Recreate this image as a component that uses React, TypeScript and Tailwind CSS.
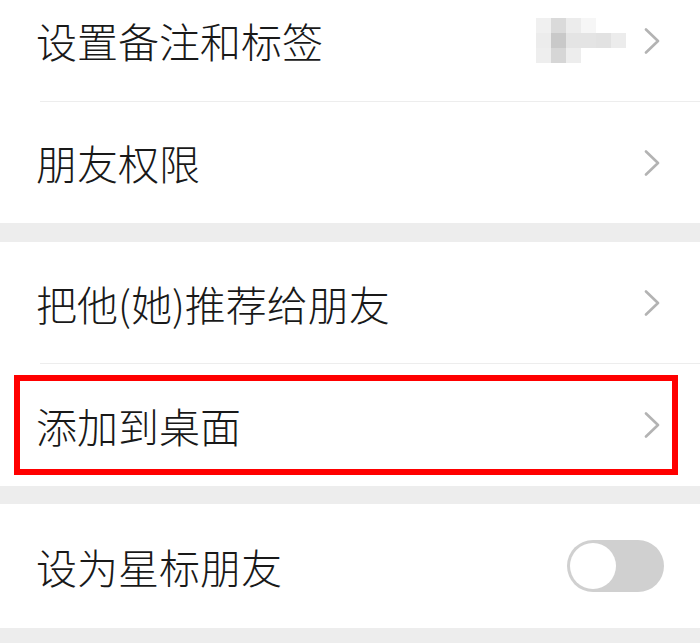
import React from 'react';

const Chevron: React.FC = () => (
  <svg width="16" height="26" viewBox="0 0 16 26" fill="none" className="shrink-0">
    <path d="M2 1.5 L14 13 L2 24.5" stroke="#b3b3b3" strokeWidth="2.6" strokeLinecap="round" strokeLinejoin="round" />
  </svg>
);

// pixelated (blurred) remark preview
const blurRows: string[][] = [
  ['#f0f0f0', '#dadada', '#ececec', '#f6f6f6', '#ffffff', '#ffffff'],
  ['#ececec', '#c9c9c9', '#e4e4e4', '#e4e4e4', '#e2e2e2', '#ececec'],
  ['#eeeeee', '#d6d6d6', '#ededed', '#ffffff', '#ffffff', '#ffffff'],
];

const Mosaic: React.FC = () => (
  <div className="flex flex-col">
    {blurRows.map((row, i) => (
      <div key={i} className="flex">
        {row.map((c, j) => (
          <div key={j} className="h-[15px] w-[15px]" style={{ backgroundColor: c }} />
        ))}
      </div>
    ))}
  </div>
);

const Row: React.FC<{ label: string; height: string; divider?: boolean; right?: React.ReactNode; children?: React.ReactNode }> = ({
  label,
  height,
  divider,
  right,
  children,
}) => (
  <div className={`relative ${height}`}>
    <div className="flex h-full items-center justify-between pl-[36px] pr-[40px]">
      <span className="text-[41px] font-light leading-none text-[#191919]">{label}</span>
      {right ?? <Chevron />}
    </div>
    {divider && <div className="absolute bottom-0 left-[40px] right-0 h-px bg-[#ededed]" />}
    {children}
  </div>
);

const App: React.FC = () => {
  return (
    <div
      className="h-[643px] w-[700px] overflow-hidden bg-[#ededed]"
      style={{ fontFamily: '"Noto Sans CJK SC", "Noto Sans", sans-serif' }}
    >
      <div className="mt-[-21px] bg-white">
        <Row
          label="设置备注和标签"
          height="h-[123px]"
          divider
          right={
            <div className="flex items-center gap-[18px]">
              <Mosaic />
              <Chevron />
            </div>
          }
        />
        <Row label="朋友权限" height="h-[121px]" />
      </div>

      <div className="mt-[19px] bg-white">
        <Row label="把他(她)推荐给朋友" height="h-[122px]" divider />
        <Row label="添加到桌面" height="h-[122px]">
          <div className="pointer-events-none absolute bottom-[11px] left-[14px] right-[22px] top-[11px] border-[6px] border-[#ff0000]" />
        </Row>
      </div>

      <div className="mt-[18px] bg-white">
        <Row
          label="设为星标朋友"
          height="h-[124px]"
          right={
            <div className="flex h-[52px] w-[97px] items-center rounded-full bg-[#d0d0d0] p-[3px] mr-[-4px]">
              <div className="h-[46px] w-[46px] rounded-full bg-white" />
            </div>
          }
        />
      </div>
    </div>
  );
};

export default App;
